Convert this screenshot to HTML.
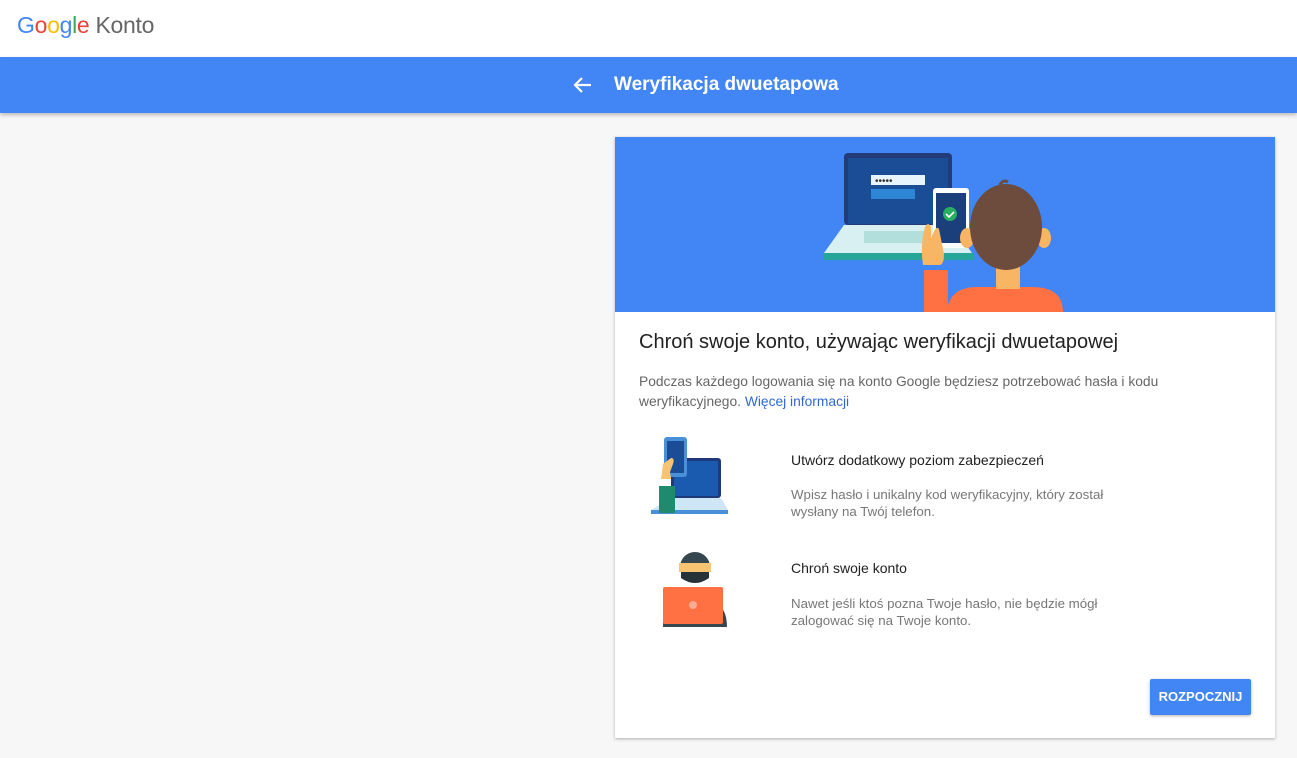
<!DOCTYPE html>
<html><head><meta charset="utf-8"><style>
*{margin:0;padding:0;box-sizing:border-box}
body{width:1297px;height:758px;background:#f7f7f7;font-family:"Liberation Sans",Arial,sans-serif;position:relative;overflow:hidden}
.top{position:absolute;left:0;top:0;width:1297px;height:57px;background:#fff}
.logo{position:absolute;left:17px;top:12px;font-size:23px;letter-spacing:-0.3px}
.bar{position:absolute;left:0;top:57px;width:1297px;height:56px;background:#4285f4;box-shadow:0 2px 4px rgba(0,0,0,.25)}
.bar .t{position:absolute;left:614px;top:17px;color:#fff;font-size:19px;font-weight:bold}
.card{position:absolute;left:615px;top:137px;width:660px;height:601px;background:#fff;box-shadow:0 1px 3px rgba(0,0,0,.3)}
.hero{position:absolute;left:0;top:0;width:660px;height:175px;background:#4285f4;overflow:hidden}
h1{position:absolute;left:24px;top:194px;font-size:20px;font-weight:normal;color:#212121}
.p{position:absolute;left:24px;top:235px;width:545px;font-size:13.8px;line-height:20px;color:#666}
.p a{color:#3367d6;text-decoration:none}
.h2{position:absolute;left:176px;font-size:14px;color:#212121}
.d{position:absolute;left:176px;width:345px;font-size:13.3px;line-height:17px;color:#777}
.btn{position:absolute;left:535px;top:542px;width:101px;height:36px;background:#4285f4;color:#fff;font-size:13px;font-weight:bold;text-align:center;line-height:36px;border-radius:2px;box-shadow:0 1px 3px rgba(0,0,0,.3)}
</style></head><body>
<div class="top"><div class="logo"><span style="color:#4285f4">G</span><span style="color:#ea4335">o</span><span style="color:#fbbc05">o</span><span style="color:#4285f4">g</span><span style="color:#34a853">l</span><span style="color:#ea4335">e</span> <span style="color:#666">Konto</span></div></div>
<div class="bar">
<svg style="position:absolute;left:572px;top:19px" width="20" height="18" viewBox="0 0 20 18"><path d="M19 9H3M10 2L3 9l7 7" stroke="#fff" stroke-width="2.2" fill="none"/></svg>
<div class="t">Weryfikacja dwuetapowa</div></div>
<div class="card">
<div class="hero"><svg width="660" height="175">
<rect x="229" y="16" width="108" height="72" rx="4" fill="#233b78"/>
<rect x="233" y="21" width="100" height="66" fill="#1a4d96"/>
<rect x="256" y="38" width="54" height="10" fill="#e8f4fb"/>
<text x="260" y="47" font-size="10" fill="#333" font-family="Liberation Sans">•••••</text>
<rect x="256" y="52" width="44" height="10" fill="#2e86d6"/>
<path d="M229 88h108l20 28H209z" fill="#d8f0f1"/>
<rect x="249" y="94" width="60" height="12" fill="#b2dfdb"/>
<rect x="209" y="116" width="150" height="7" fill="#26a69a"/>
<rect x="318" y="51" width="36" height="60" rx="3" fill="#fff"/>
<rect x="321" y="56" width="30" height="50" fill="#1a3f7a"/>
<circle cx="335" cy="77" r="7" fill="#27ae60"/>
<path d="M331 77l3 3 5-5" stroke="#fff" stroke-width="1.6" fill="none"/>
<path d="M332 175q2-25 30-25h55q31 0 31 25z" fill="#ff7043"/>
<rect x="381" y="128" width="24" height="24" fill="#f8b563"/>
<ellipse cx="352" cy="101" rx="7" ry="10" fill="#f8b563"/>
<ellipse cx="429" cy="101" rx="7" ry="10" fill="#f8b563"/>
<ellipse cx="391" cy="90" rx="36" ry="43" fill="#6d4c3d"/>
<path d="M385 48q3-6 8-3" stroke="#6d4c3d" stroke-width="3" fill="none"/>
<path d="M308 128q-3-20 2-38q3-6 6 0l0 12q5-15 8-10l5 25q0 10-4 11z" fill="#f8b563"/>
<rect x="309" y="133" width="24" height="42" fill="#ff7043"/>
</svg></div>
<h1>Chroń swoje konto, używając weryfikacji dwuetapowej</h1>
<div class="p">Podczas każdego logowania się na konto Google będziesz potrzebować hasła i kodu weryfikacyjnego. <a>Więcej informacji</a></div>
<svg style="position:absolute;left:30px;top:297px" width="90" height="86">
<rect x="26" y="24" width="50" height="40" rx="3" fill="#1f3a7a"/>
<rect x="29" y="27" width="44" height="35" fill="#1a5bb0"/>
<path d="M26 64h50l7 12H6z" fill="#cfe6f6"/><rect x="6" y="76" width="77" height="4" fill="#4a90d9"/>
<rect x="19" y="3" width="23" height="40" rx="3" fill="#4a90d9"/><rect x="22" y="7" width="17" height="32" fill="#1a4d96"/>
<path d="M16 45l2-15 8-6q4 0 2 6l-3 8 1 7z" fill="#f8c471"/>
<rect x="14" y="52" width="16" height="27" fill="#1e8a6e"/>
</svg>
<svg style="position:absolute;left:40px;top:408px" width="80" height="82">
<path d="M8 82q0-30 32-30q32 0 32 30z" fill="#37474f"/>
<circle cx="40" cy="22" r="15" fill="#37474f"/>
<rect x="24" y="18" width="32" height="9" fill="#f8c471"/>
<path d="M26 27h28v6q-14 10-28 0z" fill="#263238"/>
<rect x="8" y="42" width="60" height="37" rx="2" fill="#ff7043"/>
<circle cx="38" cy="60" r="4" fill="#ffab91"/>
</svg>
<div class="h2" style="top:315px">Utwórz dodatkowy poziom zabezpieczeń</div>
<div class="d" style="top:349px">Wpisz hasło i unikalny kod weryfikacyjny, który został wysłany na Twój telefon.</div>
<div class="h2" style="top:423px">Chroń swoje konto</div>
<div class="d" style="top:458px">Nawet jeśli ktoś pozna Twoje hasło, nie będzie mógł zalogować się na Twoje konto.</div>
<div class="btn">ROZPOCZNIJ</div>
</div>
</body></html>
